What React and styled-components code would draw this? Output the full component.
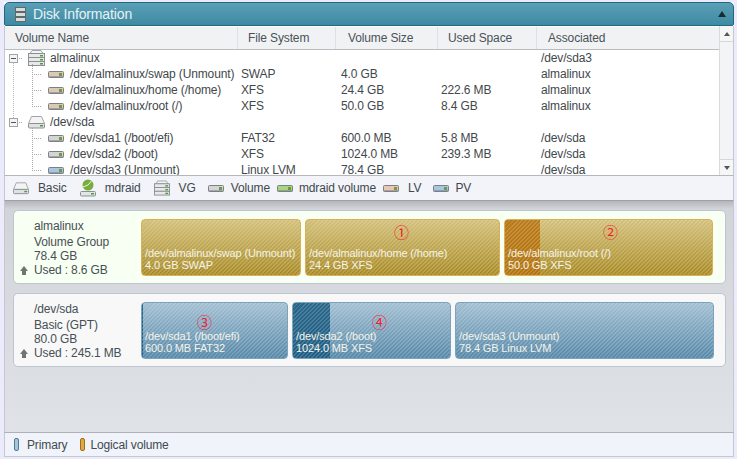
import React from 'react';
import styled, { createGlobalStyle } from 'styled-components';

const GlobalStyle = createGlobalStyle`
  html, body {
    margin: 0;
    padding: 0;
    background: #ffffff;
  }
  body {
    font-family: "Liberation Sans", Arial, sans-serif;
    font-size: 12px;
    letter-spacing: -0.13px;
    color: #404a50;
  }
`;

const Page = styled.div`
  width: 737px;
  height: 459px;
  box-sizing: border-box;
  padding: 2px 3px 2px 4px;
  background: #ecebfb;
  overflow: hidden;
`;

const Window = styled.div`
  height: 100%;
  display: flex;
  flex-direction: column;
  background: #fff;
`;

const TitleBar = styled.div`
  flex: 0 0 24px;
  display: flex;
  align-items: center;
  padding: 0 7px 0 10px;
  gap: 7px;
  border: 1px solid #1f6a80;
  border-radius: 5px 5px 2px 2px;
  box-sizing: border-box;
  background: linear-gradient(#5aa0b6, #3f8aa3);
  color: #e8f1f4;
  font-size: 14px;
`;

const TitleText = styled.span`
  flex: 1;
`;

const Collapse = styled.span`
  width: 0;
  height: 0;
  border-left: 4px solid transparent;
  border-right: 4px solid transparent;
  border-bottom: 6px solid #1c2a30;
`;

const TreePanel = styled.div`
  flex: 0 0 149px;
  display: flex;
  border-left: 1px solid #c4c8d0;
  border-right: 1px solid #c4c8d0;
  box-sizing: border-box;
  overflow: hidden;
`;

const TreeMain = styled.div`
  flex: 1;
  min-width: 0;
`;

const HeaderRow = styled.div`
  display: grid;
  grid-template-columns: 233px 98px 102px 99px 1fr;
  height: 24px;
  background: #f1f2f4;
  border-bottom: 1px solid #b8bcc0;
  box-sizing: border-box;
  border-top: 1px solid #fff;
`;

const HeaderCell = styled.div`
  display: flex;
  align-items: center;
  padding-left: ${({ $pad }) => $pad}px;
  border-right: 1px solid #dde0e4;
  color: #4a5358;

  &:last-child {
    border-right: 0;
  }
`;

const Row = styled.div`
  position: relative;
  display: grid;
  grid-template-columns: 236px 100px 100px 100px 1fr;
  height: 16px;
  line-height: 16px;
  white-space: nowrap;
  color: #3f484c;
`;

const NameCell = styled.div`
  display: flex;
  align-items: center;
  gap: ${({ $child }) => ($child ? '6px' : '5px')};
  padding-left: ${({ $child }) => ($child ? '43px' : '23px')};
  overflow: hidden;
`;

const Expander = styled.span`
  position: absolute;
  left: 4px;
  top: 4px;
  width: 7px;
  height: 7px;
  border: 1px solid #a0a4a8;
  background: #f4f4f4;

  &::before {
    content: '';
    position: absolute;
    left: 1px;
    top: 3px;
    width: 5px;
    height: 1px;
    background: #555;
  }

  &::after {
    content: '';
    position: absolute;
    left: 9px;
    top: 3px;
    width: 3px;
    border-top: 1px dotted #a8a8a8;
  }
`;

const Connector = styled.span`
  position: absolute;
  left: 27px;
  top: ${({ $first }) => ($first ? '-2px' : '-8px')};
  height: ${({ $first }) => ($first ? '10px' : '16px')};
  width: 8px;
  border-left: 1px dotted #a8a8a8;
  border-bottom: 1px dotted #a8a8a8;
`;

const Trunk = styled.span`
  position: absolute;
  left: 8px;
  top: 12px;
  height: 56px;
  border-left: 1px dotted #b8b8b8;
`;

const ScrollBar = styled.div`
  flex: 0 0 13px;
  display: flex;
  flex-direction: column;
  justify-content: space-between;
  background: #f3f4f6;
  border-left: 1px solid #d8dade;
`;

const ScrollButton = styled.div`
  height: 15px;
  display: flex;
  align-items: center;
  justify-content: center;
  background: #f6f6f7;
  border-bottom: ${({ $down }) => ($down ? '0' : '1px solid #d4d6da')};
  border-top: ${({ $down }) => ($down ? '1px solid #d4d6da' : '0')};

  &::before {
    content: '';
    width: 0;
    height: 0;
    border-left: 3px solid transparent;
    border-right: 3px solid transparent;
    ${({ $down }) =>
      $down ? 'border-top: 4px solid #555;' : 'border-bottom: 4px solid #555;'}
  }
`;

const Legend = styled.div`
  flex: 0 0 26px;
  display: flex;
  align-items: center;
  box-sizing: border-box;
  padding-left: 8px;
  background: #f2f4f9;
  border: 1px solid #c4c8d0;
  border-top: 1px solid #b4b8bc;
  border-bottom: 1px solid #9ea2a6;
  color: #3f484c;
`;

const LegendItem = styled.div`
  display: flex;
  align-items: center;
  gap: ${({ $gap }) => $gap}px;
  margin-right: ${({ $mr }) => $mr}px;
`;

const MapArea = styled.div`
  flex: 1;
  display: flex;
  flex-direction: column;
  gap: 9px;
  padding: 9px 7px 0 8px;
  background: linear-gradient(#b2b5ba 0, #d2d4da 8px, #dfe2e7 100%);
  border-left: 1px solid #c4c8d0;
  border-right: 1px solid #c4c8d0;
`;

const DiskCard = styled.div`
  height: 74px;
  box-sizing: border-box;
  display: flex;
  align-items: center;
  gap: 4px;
  padding: 0 11px 0 127px;
  position: relative;
  border: 1px solid #bcc6d0;
  border-radius: 5px;
  background: ${({ $tint }) => $tint};
`;

const DiskInfo = styled.div`
  position: absolute;
  left: 20px;
  top: 8px;
  line-height: 14px;
  color: #465055;
  white-space: nowrap;
`;

const InfoName = styled.div`
  margin-bottom: 2px;
`;

const UsedLine = styled.div`
  position: relative;

  &::before {
    content: '';
    position: absolute;
    left: -14px;
    top: 3px;
    width: 0;
    height: 0;
    border-left: 4px solid transparent;
    border-right: 4px solid transparent;
    border-bottom: 5px solid #6f7670;
  }

  &::after {
    content: '';
    position: absolute;
    left: -12px;
    top: 8px;
    width: 4px;
    height: 4px;
    background: #6f7670;
  }
`;

const palettes = {
  gold: {
    border: '#dcae58',
    bg: 'linear-gradient(#d3c07a, #a98b25)',
    used: '#b56f08',
  },
  blue: {
    border: '#7ba3bc',
    bg: 'linear-gradient(#a2bfd2, #5688a8)',
    used: '#14567c',
  },
};

const Partition = styled.div`
  position: relative;
  height: 57px;
  box-sizing: border-box;
  flex: 0 0 ${({ $width }) => $width}px;
  border: 1px solid ${({ $tone }) => palettes[$tone].border};
  border-radius: 4px;
  background: ${({ $tone }) => palettes[$tone].bg};
  overflow: hidden;
  color: #f3f3ea;
  font-size: 11px;
`;

const UsedFill = styled.div`
  position: absolute;
  left: 0;
  top: 0;
  bottom: 0;
  background: ${({ $tone }) => palettes[$tone].used};
  opacity: 0.85;
`;

const Hatch = styled.div`
  position: absolute;
  inset: 0;
  background: repeating-linear-gradient(
    135deg,
    rgba(255, 255, 255, 0.17) 0 1.41px,
    rgba(255, 255, 255, 0) 1.41px 2.83px
  );
`;

const PartLabel = styled.div`
  position: absolute;
  left: 3px;
  bottom: 4px;
  line-height: 12px;
  white-space: nowrap;
`;

const Marker = styled.span`
  position: absolute;
  top: ${({ $top }) => $top}px;
  left: ${({ $at }) => $at}px;
  color: #f0202c;
  font-family: "Noto Sans CJK JP", "DejaVu Sans", sans-serif;
  font-size: 15px;
  line-height: 20px;
  letter-spacing: 0;
`;

const Footer = styled.div`
  flex: 0 0 25px;
  display: flex;
  align-items: center;
  box-sizing: border-box;
  padding-left: 9px;
  gap: 13px;
  background: #f0f3f9;
  border: 1px solid #c4c8d0;
  border-top: 1px solid #aeb2b6;
`;

const Swatch = styled.span`
  display: inline-block;
  width: 3px;
  height: 11px;
  border: 1px solid ${({ $line }) => $line};
  border-radius: 2px;
  background: ${({ $fill }) => $fill};
`;

const FooterItem = styled.div`
  display: flex;
  align-items: center;
  gap: ${({ $gap }) => $gap}px;
`;

const StackIcon = ({ width = 17 }) => (
  <svg width={width} height="16" viewBox="0 0 17 16">
    <path d="M2 3.5L4 0.5h9l2 3z" fill="#f4f4f4" stroke="#a0a4a8" />
    {[3, 7, 11].map((y) => (
      <g key={y}>
        <rect x="0.5" y={y + 0.5} width="16" height="4" fill="#e8eaea" stroke="#8c9094" />
        <rect x="12" y={y + 2} width="3" height="1.5" fill="#4f9a3c" />
      </g>
    ))}
  </svg>
);

const DiskIcon = ({ width = 17 }) => (
  <svg width={width} height="14" viewBox="0 0 17 14">
    <path d="M3.5 1.5h10l3 7H0.5z" fill="#f4f4f4" stroke="#a0a4a8" />
    <rect x="0.5" y="8.5" width="16" height="4.5" rx="1" fill="#dfe1e3" stroke="#8c9094" />
    <rect x="12" y="10" width="3" height="1.5" fill="#4f9a3c" />
  </svg>
);

const RaidIcon = () => (
  <svg width="16" height="18" viewBox="0 0 16 18">
    <circle cx="8" cy="6" r="5.5" fill="#78ad3e" />
    <path d="M8 6L11.5 2M8 6L3 8" stroke="#e8f2dc" strokeWidth="1" />
    <rect x="0.5" y="12.5" width="15" height="4.5" rx="1" fill="#e4e6e6" stroke="#8c9094" />
    <rect x="11" y="14" width="3" height="1.5" fill="#4f9a3c" />
  </svg>
);

const VolumeIcon = ({ fill = '#d4d6d6' }) => (
  <svg width="16" height="7" viewBox="0 0 16 7">
    <rect x="0.5" y="0.5" width="15" height="6" rx="1" fill={fill} stroke="#7c8086" />
    <rect x="0.5" y="5" width="15" height="1.5" fill="#7c8086" opacity="0.55" />
    <rect x="11" y="2" width="3" height="3" fill="#6f9a44" />
  </svg>
);

const treeRows = [
  { name: 'almalinux', assoc: '/dev/sda3', icon: 'stack', expander: true, trunk: true },
  { name: '/dev/almalinux/swap (Unmount)', fs: 'SWAP', size: '4.0 GB', assoc: 'almalinux', first: true },
  { name: '/dev/almalinux/home (/home)', fs: 'XFS', size: '24.4 GB', used: '222.6 MB', assoc: 'almalinux' },
  { name: '/dev/almalinux/root (/)', fs: 'XFS', size: '50.0 GB', used: '8.4 GB', assoc: 'almalinux' },
  { name: '/dev/sda', icon: 'disk', expander: true },
  { name: '/dev/sda1 (/boot/efi)', fs: 'FAT32', size: '600.0 MB', used: '5.8 MB', assoc: '/dev/sda', tone: '#d4d6d6', first: true },
  { name: '/dev/sda2 (/boot)', fs: 'XFS', size: '1024.0 MB', used: '239.3 MB', assoc: '/dev/sda', tone: '#d4d6d6' },
  { name: '/dev/sda3 (Unmount)', fs: 'Linux LVM', size: '78.4 GB', assoc: '/dev/sda', tone: '#a9c6e0' },
];

const columns = [
  { label: 'Volume Name', pad: 10 },
  { label: 'File System', pad: 10 },
  { label: 'Volume Size', pad: 12 },
  { label: 'Used Space', pad: 10 },
  { label: 'Associated', pad: 11 },
];

const disks = [
  {
    tint: '#f8fff3',
    info: ['almalinux', 'Volume Group', '78.4 GB', 'Used : 8.6 GB'],
    tone: 'gold',
    markTop: 2,
    parts: [
      { w: 160, a: '/dev/almalinux/swap (Unmount)', b: '4.0 GB SWAP' },
      { w: 195, a: '/dev/almalinux/home (/home)', b: '24.4 GB XFS', mark: '①', at: 88 },
      { w: 209, a: '/dev/almalinux/root (/)', b: '50.0 GB XFS', mark: '②', at: 98, used: 16.8 },
    ],
  },
  {
    tint: '#f8f8f8',
    info: ['/dev/sda', 'Basic (GPT)', '80.0 GB', 'Used : 245.1 MB'],
    tone: 'blue',
    markTop: 9,
    parts: [
      { w: 147, a: '/dev/sda1 (/boot/efi)', b: '600.0 MB FAT32', mark: '③', at: 55, used: 1 },
      { w: 159, a: '/dev/sda2 (/boot)', b: '1024.0 MB XFS', mark: '④', at: 79, used: 23.4 },
      { w: 259, a: '/dev/sda3 (Unmount)', b: '78.4 GB Linux LVM' },
    ],
  },
];

const App = () => (
  <Page>
    <GlobalStyle />
    <Window>
      <TitleBar>
        <svg width="11" height="15" viewBox="0 0 11 15">
          {[0, 5, 10].map((y) => (
            <rect key={y} x="0.5" y={y + 0.5} width="10" height="4" fill="#d9dcd8" stroke="#5d6a6e" />
          ))}
        </svg>
        <TitleText>Disk Information</TitleText>
        <Collapse />
      </TitleBar>

      <TreePanel>
        <TreeMain>
          <HeaderRow>
            {columns.map((c) => (
              <HeaderCell key={c.label} $pad={c.pad}>{c.label}</HeaderCell>
            ))}
          </HeaderRow>
          {treeRows.map((r) => (
            <Row key={r.name}>
              {r.expander && <Expander />}
              {r.trunk && <Trunk />}
              {!r.icon && <Connector $first={r.first} />}
              <NameCell $child={!r.icon}>
                {r.icon === 'stack' && <StackIcon />}
                {r.icon === 'disk' && <DiskIcon />}
                {!r.icon && <VolumeIcon fill={r.tone || '#dcc9b4'} />}
                {r.name}
              </NameCell>
              <div>{r.fs}</div>
              <div>{r.size}</div>
              <div>{r.used}</div>
              <div>{r.assoc}</div>
            </Row>
          ))}
        </TreeMain>
        <ScrollBar>
          <ScrollButton />
          <ScrollButton $down />
        </ScrollBar>
      </TreePanel>

      <Legend>
        <LegendItem $gap={9} $mr={13}>
          <DiskIcon width={16} />
          Basic
        </LegendItem>
        <LegendItem $gap={9} $mr={13}>
          <RaidIcon />
          mdraid
        </LegendItem>
        <LegendItem $gap={9} $mr={12}>
          <StackIcon width={16} />
          VG
        </LegendItem>
        <LegendItem $gap={7} $mr={7}>
          <VolumeIcon />
          Volume
        </LegendItem>
        <LegendItem $gap={6} $mr={7}>
          <VolumeIcon fill="#a6d67e" />
          mdraid volume
        </LegendItem>
        <LegendItem $gap={9} $mr={12}>
          <VolumeIcon fill="#e8c8b0" />
          LV
        </LegendItem>
        <LegendItem $gap={6} $mr={0}>
          <VolumeIcon fill="#a9c6e0" />
          PV
        </LegendItem>
      </Legend>

      <MapArea>
        {disks.map((d) => (
          <DiskCard key={d.info[0]} $tint={d.tint}>
            <DiskInfo>
              <InfoName>{d.info[0]}</InfoName>
              <div>{d.info[1]}</div>
              <div>{d.info[2]}</div>
              <UsedLine>{d.info[3]}</UsedLine>
            </DiskInfo>
            {d.parts.map((p) => (
              <Partition key={p.a} $width={p.w} $tone={d.tone}>
                {p.used && <UsedFill $tone={d.tone} style={{ width: `${p.used}%` }} />}
                <Hatch />
                {p.mark && <Marker $at={p.at} $top={d.markTop}>{p.mark}</Marker>}
                <PartLabel>
                  {p.a}
                  <br />
                  {p.b}
                </PartLabel>
              </Partition>
            ))}
          </DiskCard>
        ))}
      </MapArea>

      <Footer>
        <FooterItem $gap={8}>
          <Swatch $line="#4f7d98" $fill="#a8c6da" />
          Primary
        </FooterItem>
        <FooterItem $gap={5}>
          <Swatch $line="#a06e14" $fill="#e0a848" />
          Logical volume
        </FooterItem>
      </Footer>
    </Window>
  </Page>
);

export default App;
